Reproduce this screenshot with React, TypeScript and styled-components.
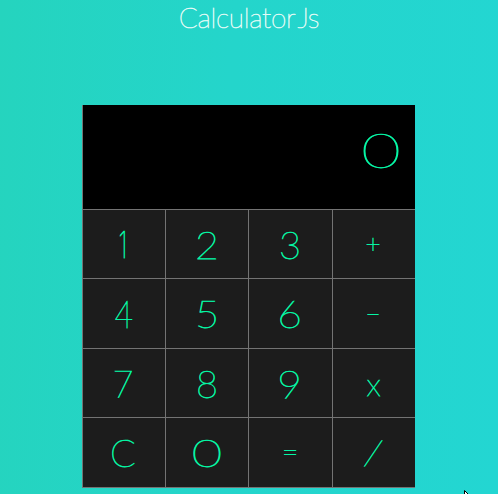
import React from "react";
import styled, { createGlobalStyle } from "styled-components";

const GlobalStyle = createGlobalStyle`
  * { box-sizing: border-box; }
  html, body { margin: 0; height: 100%; overflow: hidden; }
`;

const Page = styled.main`
  width: 498px;
  height: 494px;
  overflow: hidden;
  display: flex;
  flex-direction: column;
  align-items: center;
  background: linear-gradient(93deg, #25d4be 0%, #24d5cb 45%, #23d6d2 100%);
  font-family: Lato, "Open Sans", sans-serif;
`;

const Title = styled.h1`
  margin: 0;
  height: 105px;
  font-size: 28px;
  line-height: 34px;
  font-weight: 100;
  letter-spacing: -0.3px;
  -webkit-text-stroke: 0.7px #e4fbf6;
  color: #e4fbf6;
`;

const Suffix = styled.span`
  margin-left: 2px;
`;

const Calculator = styled.section`
  width: 333px;
  margin-right: 1px;
  border-bottom: 1px solid #737373;
  background: #1c1c1c;
  color: #06f5a4;
`;

const Display = styled.output`
  display: flex;
  align-items: center;
  justify-content: flex-end;
  height: 104px;
  padding: 0 20px 11px 0;
  border-left: 1px solid #737373;
  background: #000;
  line-height: 1;
`;

const Keypad = styled.div`
  display: grid;
  grid-template-columns: 83px 83px 84px 83px;
  grid-template-rows: 69px 70px 69px 70px;
`;

const Key = styled.button`
  display: flex;
  align-items: center;
  justify-content: center;
  padding: 0;
  border: 0 solid #737373;
  border-width: 1px 0 0 1px;
  background: transparent;
  color: inherit;
  font: inherit;
  line-height: 1;
`;

type GlyphProps = { $size: number; $stretch?: number; $skew?: number; $x?: number; $y?: number; $face?: string };

const Glyph = styled.span<GlyphProps>`
  display: block;
  font-family: ${(p) => p.$face ?? "Lato"}, sans-serif;
  font-size: ${(p) => p.$size}px;
  font-weight: 100;
  -webkit-text-stroke: 0.75px currentColor;
  transform: translate(${(p) => p.$x ?? 0}px, ${(p) => p.$y ?? 0}px)
    skewX(${(p) => p.$skew ?? 0}deg) scaleX(${(p) => p.$stretch ?? 1});
`;

const Pointer = styled.svg`
  position: fixed;
  left: 464px;
  top: 490px;
`;

type KeySpec = { label: string; size: number; stretch?: number; skew?: number; x?: number; y?: number; face?: string };

const keys: KeySpec[] = [
  { label: "1", size: 37, face: "Inter", stretch: 0.65, x: -1 },
  { label: "2", size: 38, stretch: 1.08 },
  { label: "3", size: 38, x: -0.5 },
  { label: "+", size: 26, x: -1, y: -1 },
  { label: "4", size: 38, stretch: 0.83, y: -1 },
  { label: "5", size: 38, stretch: 1.1, y: -1 },
  { label: "6", size: 38, stretch: 1.12, x: -0.5, y: -1 },
  { label: "−", size: 26, x: -1, y: -1.5 },
  { label: "7", size: 38, stretch: 0.95, x: -1 },
  { label: "8", size: 38 },
  { label: "9", size: 38, stretch: 1.12, x: -0.5 },
  { label: "x", size: 32, x: -0.5, y: 1 },
  { label: "C", size: 38, x: -1, y: -1 },
  { label: "0", size: 38, stretch: 1.38, y: -1 },
  { label: "=", size: 28, x: -0.5, y: -2 },
  { label: "/", size: 34, skew: -14, x: -0.5, y: -1 },
];

export default function App() {
  return (
    <Page>
      <GlobalStyle />
      <Title>Calculator<Suffix>Js</Suffix></Title>
      <Calculator>
        <Display>
          <Glyph $size={48} $stretch={1.42} $y={-2}>0</Glyph>
        </Display>
        <Keypad>
          {keys.map((k) => (
            <Key key={k.label}>
              <Glyph $size={k.size} $stretch={k.stretch} $skew={k.skew} $x={k.x} $y={k.y} $face={k.face}>
                {k.label}
              </Glyph>
            </Key>
          ))}
        </Keypad>
      </Calculator>
      <Pointer width="12" height="18" viewBox="0 0 12 18" aria-hidden="true">
        <path d="M.5.5v15l3.5-3.5 2.5 5 2-1-2.5-5h5z" fill="#fff" stroke="#000" />
      </Pointer>
    </Page>
  );
}
